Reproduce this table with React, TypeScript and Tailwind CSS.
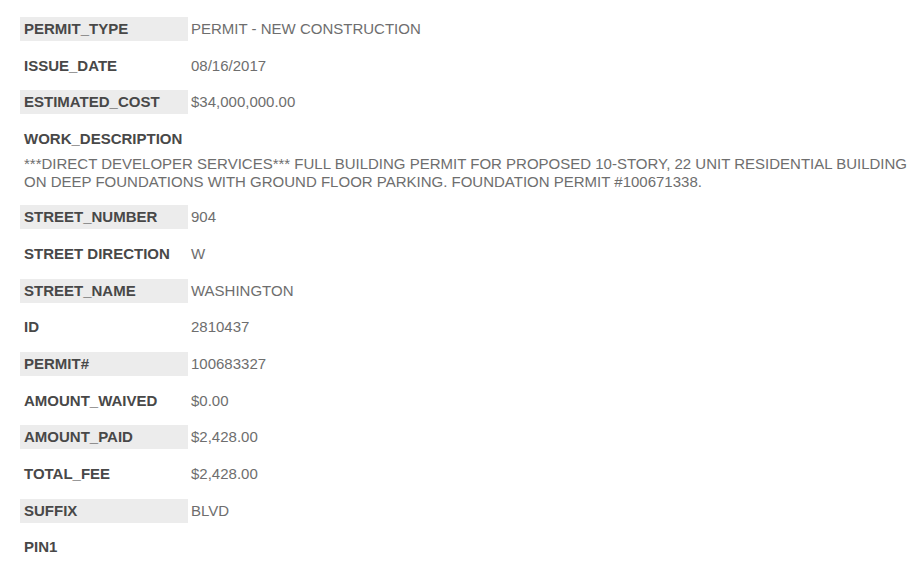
import React from "react";

type Row = { label: string; value?: string; shaded: boolean };

const before: Row[] = [
  { label: "PERMIT_TYPE", value: "PERMIT - NEW CONSTRUCTION", shaded: true },
  { label: "ISSUE_DATE", value: "08/16/2017", shaded: false },
  { label: "ESTIMATED_COST", value: "$34,000,000.00", shaded: true },
];

const after: Row[] = [
  { label: "STREET_NUMBER", value: "904", shaded: true },
  { label: "STREET DIRECTION", value: "W", shaded: false },
  { label: "STREET_NAME", value: "WASHINGTON", shaded: true },
  { label: "ID", value: "2810437", shaded: false },
  { label: "PERMIT#", value: "100683327", shaded: true },
  { label: "AMOUNT_WAIVED", value: "$0.00", shaded: false },
  { label: "AMOUNT_PAID", value: "$2,428.00", shaded: true },
  { label: "TOTAL_FEE", value: "$2,428.00", shaded: false },
  { label: "SUFFIX", value: "BLVD", shaded: true },
  { label: "PIN1", value: "", shaded: false },
];

function FieldRow({ row }: { row: Row }) {
  return (
    <div className="flex h-6 items-center mb-[12.67px]">
      <div
        className={
          row.shaded
            ? "w-[168px] h-6 flex items-center pl-1 bg-[#ececec] font-bold text-[#484848]"
            : "w-[168px] h-6 flex items-center pl-1 font-bold text-[#484848]"
        }
      >
        {row.label}
      </div>
      <div className="pl-[3px] text-[#6e6e6e]">{row.value}</div>
    </div>
  );
}

export default function App() {
  return (
    <div
      className="w-[920px] h-[562px] bg-white overflow-hidden pl-5 pt-[17px] text-[15px] leading-[18px]"
      style={{ fontFamily: '"Liberation Sans", Arial, sans-serif' }}
    >
      {before.map((r) => (
        <FieldRow key={r.label} row={r} />
      ))}
      <div className="flex h-6 items-center pl-1 font-bold text-[#484848]">WORK_DESCRIPTION</div>
      <div className="pl-1 pt-1 pb-[14.5px] text-[#6e6e6e] leading-[18px]">
        ***DIRECT DEVELOPER SERVICES*** FULL BUILDING PERMIT FOR PROPOSED 10-STORY, 22 UNIT RESIDENTIAL BUILDING
        <br />
        ON DEEP FOUNDATIONS WITH GROUND FLOOR PARKING. FOUNDATION PERMIT #100671338.
      </div>
      {after.map((r) => (
        <FieldRow key={r.label} row={r} />
      ))}
    </div>
  );
}
